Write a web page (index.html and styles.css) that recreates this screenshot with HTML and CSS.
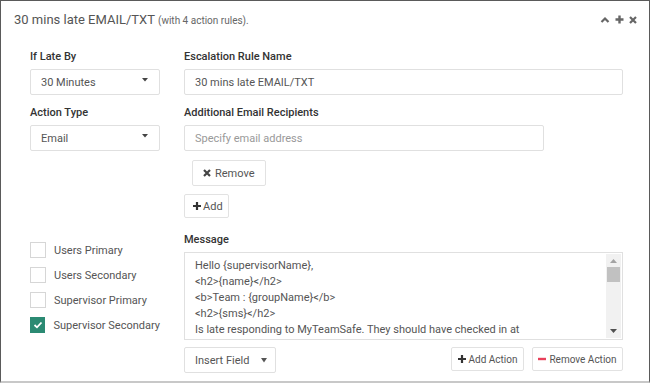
FILE: index.html
```html
<!DOCTYPE html>
<html lang="en">
<head>
    <meta charset="UTF-8">
    <title>Escalation Rule</title>
    <link rel="stylesheet" href="styles.css">
</head>
<body>
    <div class="panel">
        <div class="panel-header">
            <div class="panel-title">30 mins late EMAIL/TXT <small>(with 4 action rules).</small></div>
            <div class="panel-tools">
                <svg width="10" height="8" viewBox="0 0 10 8"><path d="M1.5 6 L5 2.5 L8.5 6" fill="none" stroke="#666" stroke-width="2.2"/></svg>
                <svg width="9" height="9" viewBox="0 0 9 9"><path d="M4.5 0.5 V8.5 M0.5 4.5 H8.5" stroke="#666" stroke-width="2.4"/></svg>
                <svg width="8" height="8" viewBox="0 0 8 8"><path d="M1 1 L7 7 M7 1 L1 7" stroke="#666" stroke-width="2.2"/></svg>
            </div>
        </div>

        <div class="panel-body">
            <div class="row">
                <div class="col-left">
                    <label class="field-label">If Late By</label>
                    <div class="select">
                        <span>30 Minutes</span>
                        <svg class="caret" width="6" height="4" viewBox="0 0 6 4"><path d="M0 0 H6 L3 3.5 Z" fill="#444"/></svg>
                    </div>
                </div>
                <div class="col-right">
                    <label class="field-label">Escalation Rule Name</label>
                    <div class="input">30 mins late EMAIL/TXT</div>
                </div>
            </div>

            <div class="row">
                <div class="col-left">
                    <label class="field-label">Action Type</label>
                    <div class="select">
                        <span>Email</span>
                        <svg class="caret" width="6" height="4" viewBox="0 0 6 4"><path d="M0 0 H6 L3 3.5 Z" fill="#444"/></svg>
                    </div>
                </div>
                <div class="col-right">
                    <label class="field-label">Additional Email Recipients</label>
                    <div class="input input-short placeholder">Specify email address</div>
                    <button class="btn btn-remove">
                        <svg width="8" height="8" viewBox="0 0 8 8"><path d="M1 1 L7 7 M7 1 L1 7" stroke="#444" stroke-width="2.2"/></svg>
                        Remove
                    </button>
                    <button class="btn btn-add">
                        <svg width="8" height="8" viewBox="0 0 8 8"><path d="M4 0 V8 M0 4 H8" stroke="#333" stroke-width="2.2"/></svg>
                        Add
                    </button>
                </div>
            </div>

            <div class="row row-message">
                <div class="col-left checks">
                    <div class="check"><span class="box"></span>Users Primary</div>
                    <div class="check"><span class="box"></span>Users Secondary</div>
                    <div class="check"><span class="box"></span>Supervisor Primary</div>
                    <div class="check"><span class="box checked">
                        <svg width="10" height="8" viewBox="0 0 10 8"><path d="M1.5 4 L4 6.3 L8.5 1.5" fill="none" stroke="#fff" stroke-width="1.8"/></svg>
                    </span>Supervisor Secondary</div>
                </div>
                <div class="col-right">
                    <label class="field-label">Message</label>
                    <div class="textarea">
                        <div class="textarea-text">
                            Hello {supervisorName},<br>
                            &lt;h2&gt;{name}&lt;/h2&gt;<br>
                            &lt;b&gt;Team : {groupName}&lt;/b&gt;<br>
                            &lt;h2&gt;{sms}&lt;/h2&gt;<br>
                            Is late responding to MyTeamSafe. They should have checked in at<br>
                            {lastWorkNextShouldBe}.<br>
                        </div>
                        <div class="scrollbar">
                            <svg width="7" height="4" viewBox="0 0 7 4"><path d="M0 4 H7 L3.5 0 Z" fill="#a3a3a3"/></svg>
                            <div class="thumb"></div>
                            <div class="track"></div>
                            <svg width="7" height="4" viewBox="0 0 7 4"><path d="M0 0 H7 L3.5 4 Z" fill="#505050"/></svg>
                        </div>
                    </div>
                    <div class="actions">
                        <div class="select select-small">
                            <span>Insert Field</span>
                            <svg class="caret" width="6" height="6" viewBox="0 0 6 6"><path d="M0 1 H6 L3 5.5 Z" fill="#555"/></svg>
                        </div>
                        <div class="action-buttons">
                            <button class="btn btn-action add-action">
                                <svg width="8" height="8" viewBox="0 0 8 8"><path d="M4 0 V8 M0 4 H8" stroke="#333" stroke-width="2.2"/></svg>
                                Add Action
                            </button>
                            <button class="btn btn-action remove-action">
                                <svg width="8" height="4" viewBox="0 0 8 4"><path d="M0 2 H8" stroke="#e8405a" stroke-width="2.4"/></svg>
                                Remove Action
                            </button>
                        </div>
                    </div>
                </div>
            </div>
        </div>
    </div>
</body>
</html>
```

FILE: styles.css
```css
body {
    margin: 0;
    font-family: Roboto, "Liberation Sans", sans-serif;
    background: #fff;
    color: #555;
}
.panel {
    width: 650px;
    height: 383px;
    box-sizing: border-box;
    border: 1px solid #5a5a5a;
    border-bottom: 2px solid #c8c8c8;
    background: #fff;
}
.panel-header {
    height: 37px;
    display: flex;
    align-items: center;
    justify-content: space-between;
    padding: 0 12px 0 13px;
}
.panel-title {
    font-size: 13px;
    color: #555;
}
.panel-title small {
    font-size: 10px;
    color: #666;
}
.panel-tools {
    display: flex;
    align-items: center;
    gap: 5px;
}
.panel-body {
    padding: 12px 0 0 29px;
}
.row {
    display: flex;
    gap: 24px;
    align-items: flex-start;
    margin-bottom: 11px;
}
.col-left {
    width: 130px;
}
.col-right {
    width: 439px;
}
.field-label {
    display: block;
    font-size: 11px;
    font-weight: 500;
    color: #333;
    line-height: 14px;
    margin-bottom: 5px;
}
.select, .input {
    height: 26px;
    box-sizing: border-box;
    border: 1px solid #e0e0e0;
    border-radius: 2px;
    font-size: 11px;
    color: #555;
    display: flex;
    align-items: center;
    padding: 0 10px;
    white-space: nowrap;
}
.select {
    justify-content: space-between;
}
.select .caret {
    margin-top: -4px;
    margin-right: 1px;
}
.input-short {
    width: 360px;
}
.placeholder {
    color: #999;
}
.btn {
    display: flex;
    align-items: center;
    gap: 3px;
    background: #fff;
    border: 1px solid #e2e2e2;
    border-radius: 2px;
    font-family: Roboto, "Liberation Sans", sans-serif;
    font-size: 11px;
    color: #555;
    padding: 0 9px;
    white-space: nowrap;
    cursor: pointer;
}
.btn-remove {
    height: 26px;
    margin: 9px 0 0 8px;
    padding: 0 10px;
    gap: 4px;
}
.btn-add {
    height: 24px;
    margin-top: 8px;
    padding: 0 5px 0 8px;
    gap: 2px;
}
.row-message {
    margin-top: 15px;
}
.checks {
    padding-top: 9px;
    display: flex;
    flex-direction: column;
    gap: 9px;
}
.check {
    display: flex;
    align-items: center;
    gap: 8px;
    font-size: 11px;
    color: #555;
    height: 16px;
    white-space: nowrap;
}
.box {
    width: 16px;
    height: 16px;
    box-sizing: border-box;
    border: 1px solid #d6d6d6;
    display: flex;
    align-items: center;
    justify-content: center;
}
.box.checked {
    background: #2b8a73;
    border-color: #2b8a73;
}
.textarea {
    height: 88px;
    box-sizing: border-box;
    border: 1px solid #e0e0e0;
    display: flex;
    overflow: hidden;
}
.textarea-text {
    flex: 1;
    padding: 5px 10px;
    font-size: 11px;
    line-height: 16px;
    color: #555;
    white-space: nowrap;
    overflow: hidden;
}
.scrollbar {
    width: 15px;
    margin: 1px 1px 1px 0;
    background: #f1f1f1;
    display: flex;
    flex-direction: column;
    align-items: center;
    padding: 5px 0 5px;
    gap: 4px;
}
.thumb {
    width: 13px;
    height: 15px;
    background: #c1c1c1;
}
.track {
    flex: 1;
}
.actions {
    display: flex;
    justify-content: space-between;
    align-items: flex-start;
    margin-top: 7px;
}
.select-small {
    width: 92px;
    height: 26px;
    padding-right: 7px;
}
.select-small .caret {
    margin-top: 0;
}
.action-buttons {
    display: flex;
    gap: 8px;
}
.btn-action {
    height: 24px;
    padding: 0;
    justify-content: center;
    font-size: 10px;
}
.add-action {
    width: 73px;
}
.remove-action {
    width: 91px;
}
```
